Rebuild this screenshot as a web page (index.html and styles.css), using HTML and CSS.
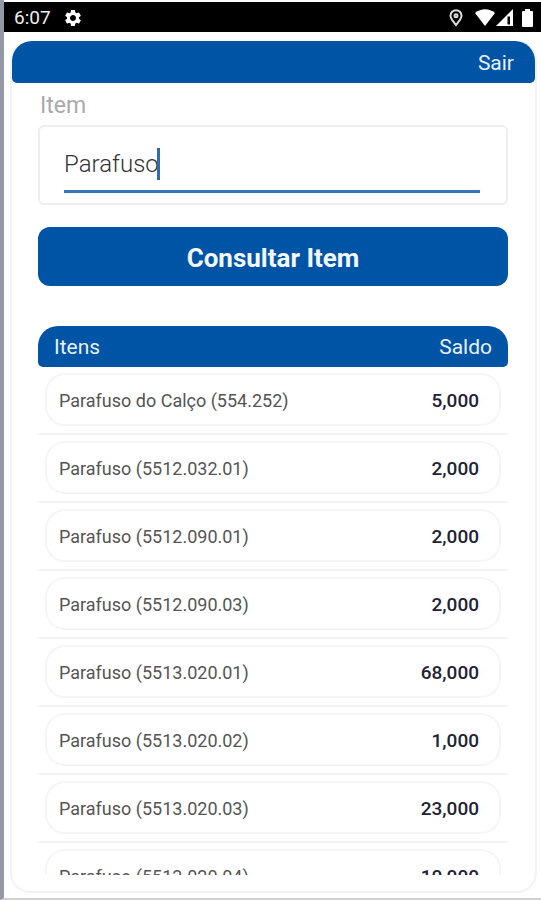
FILE: index.html
```html
<!DOCTYPE html>
<html lang="pt-BR">
<head>
    <meta charset="UTF-8">
    <meta name="viewport" content="width=device-width, initial-scale=1.0">
    <title>Consultar Item</title>
    <link rel="stylesheet" href="styles.css">
</head>
<body>
    <div class="status-bar">
        <span>6:07</span>
        <svg class="gear" width="20" height="20" viewBox="0 0 24 24" fill="#fff">
            <path d="M19.14 12.94c.04-.3.06-.61.06-.94 0-.32-.02-.64-.07-.94l2.03-1.58c.18-.14.23-.41.12-.61l-1.92-3.32c-.12-.22-.37-.29-.59-.22l-2.39.96c-.5-.38-1.03-.7-1.62-.94l-.36-2.54c-.04-.24-.24-.41-.48-.41h-3.84c-.24 0-.43.17-.47.41l-.36 2.54c-.59.24-1.13.57-1.62.94l-2.39-.96c-.22-.08-.47 0-.59.22L2.74 8.87c-.12.21-.08.47.12.61l2.03 1.58c-.05.3-.09.63-.09.94s.02.64.07.94l-2.03 1.58c-.18.14-.23.41-.12.61l1.92 3.32c.12.22.37.29.59.22l2.39-.96c.5.38 1.03.7 1.62.94l.36 2.54c.05.24.24.41.48.41h3.84c.24 0 .44-.17.47-.41l.36-2.54c.59-.24 1.13-.56 1.62-.94l2.39.96c.22.08.47 0 .59-.22l1.92-3.32c.12-.22.07-.47-.12-.61l-2.01-1.58zM12 15.6c-1.98 0-3.6-1.62-3.6-3.6s1.62-3.6 3.6-3.6 3.6 1.62 3.6 3.6-1.62 3.6-3.6 3.6z"/>
        </svg>
        <div class="status-icons">
            <svg class="pin" width="14" height="18" viewBox="0 0 14 18" fill="none" stroke="#ddd" stroke-width="2">
                <path d="M7 16C4 12.400 1.500 9.500 1.500 6.700a5.500 5.500 0 0 1 11 0C12.500 9.500 10 12.400 7 16z"/>
                <circle cx="7" cy="6.700" r="1.500"/>
            </svg>
            <svg width="20" height="17" viewBox="0 0 20 17" fill="#fff">
                <path d="M0 4C6-1 14-1 20 4L10 17z"/>
            </svg>
            <svg class="signal" width="17" height="17" viewBox="0 0 17 17">
                <path d="M0 17L17 0v17z" fill="#fff"/>
                <path d="M11.500 7.500h2.500v8h-2.500z" fill="#000"/>
            </svg>
            <svg class="battery" width="11" height="18" viewBox="0 0 11 18" fill="#fff">
                <path d="M3 0h5v2h2a1 1 0 0 1 1 1v14a1 1 0 0 1-1 1H1a1 1 0 0 1-1-1V3a1 1 0 0 1 1-1h2z"/>
            </svg>
        </div>
    </div>

    <div class="container">
        <div class="top-bar">
            <a href="#">Sair</a>
        </div>
        <div class="content">
            <label for="item">Item</label>
            <div class="input-box">
                <input type="text" id="item" value="Parafuso">
                <span class="cursor"></span>
            </div>
            <button type="button">Consultar Item</button>

            <table class="item-list">
                <thead>
                    <tr><th>Itens</th><th>Saldo</th></tr>
                </thead>
                <tbody>
                    <tr><td>Parafuso do Calço (554.252)</td><td>5,000</td></tr>
                    <tr><td>Parafuso (5512.032.01)</td><td>2,000</td></tr>
                    <tr><td>Parafuso (5512.090.01)</td><td>2,000</td></tr>
                    <tr><td>Parafuso (5512.090.03)</td><td>2,000</td></tr>
                    <tr><td>Parafuso (5513.020.01)</td><td>68,000</td></tr>
                    <tr><td>Parafuso (5513.020.02)</td><td>1,000</td></tr>
                    <tr><td>Parafuso (5513.020.03)</td><td>23,000</td></tr>
                    <tr><td>Parafuso (5513.020.04)</td><td>10,000</td></tr>
                </tbody>
            </table>
        </div>
    </div>
</body>
</html>
```

FILE: styles.css
```css
* {
    box-sizing: border-box;
}

body {
    font-family: Roboto, sans-serif;
    display: flex;
    flex-direction: column;
    height: 100vh;
    margin: 0;
    padding-top: 2px;
    background-color: #fff;
    border-left: 4px solid #9498a6;
    border-bottom: 2px solid #d0d0d0;
}

/* Status bar */
.status-bar {
    display: flex;
    flex-shrink: 0;
    align-items: center;
    height: 30px;
    padding: 1px 8px 0 10px;
    background-color: #000;
    color: #eee;
    font-size: 19px;
}

.gear {
    margin-left: 12px;
}

.status-icons {
    display: flex;
    align-items: center;
    margin-left: auto;
}

.pin {
    margin-right: 12px;
}

.signal {
    margin-left: 1px;
}

.battery {
    margin-left: 9px;
}

/* Card */
.container {
    display: flex;
    flex: 1;
    flex-direction: column;
    min-height: 0;
    margin: 9px 4px 5px 6px;
    border: 2px solid #f3f3f3;
    border-top: none;
    border-radius: 20px;
}

.top-bar {
    display: flex;
    flex-shrink: 0;
    align-items: center;
    justify-content: flex-end;
    height: 42px;
    padding: 2px 21px 0;
    background-color: #0054a6;
    border-radius: 20px 20px 5px 5px;
}

.top-bar a {
    color: #e8f0fa;
    font-size: 21px;
    text-decoration: none;
}

.content {
    display: flex;
    flex: 1;
    flex-direction: column;
    min-height: 0;
    padding: 9px 27px 16px 26px;
}

label {
    margin-left: 2px;
    color: #aaa;
    font-size: 23px;
    line-height: 28px;
}

.input-box {
    position: relative;
    flex-shrink: 0;
    margin-top: 5px;
    padding: 16px 26px 10px 24px;
    border: 2px solid #eee;
    border-radius: 6px;
}

input {
    display: block;
    width: 100%;
    height: 50px;
    padding: 0 0 5px;
    border: none;
    border-bottom: 3px solid #3a74b4;
    outline: none;
    background: none;
    color: #333;
    font-family: inherit;
    font-size: 24px;
    font-weight: 300;
}

.cursor {
    position: absolute;
    top: 21px;
    left: 117px;
    width: 3px;
    height: 32px;
    background-color: #2f6cb0;
}

button {
    flex-shrink: 0;
    height: 59px;
    margin: 22px 0 40px;
    padding: 2px 0 0;
    border: none;
    border-radius: 12px;
    background-color: #0054a6;
    color: #f4f8ff;
    font-family: inherit;
    font-size: 26px;
    font-weight: 700;
    cursor: pointer;
}

/* Results */
.item-list {
    display: block;
    flex: 1;
    min-height: 0;
    overflow: hidden;
}

.item-list thead,
.item-list tbody {
    display: block;
}

.item-list tr {
    display: flex;
}

.item-list thead tr {
    justify-content: space-between;
    padding: 2px 16px 0;
    background-color: #0054a6;
    border-radius: 20px 20px 5px 5px;
}

.item-list th {
    padding: 0;
    color: #e8f0fa;
    font-size: 21px;
    font-weight: 400;
    line-height: 39px;
}

.item-list tbody tr {
    padding: 6px 7px 7px;
    border-bottom: 2px solid #f3f3f3;
}

.item-list td {
    padding: 2px 0 0;
    border: 2px solid #f5f5f5;
    color: #555;
    font-size: 18px;
    line-height: 47px;
}

.item-list td:first-child {
    flex: 1;
    padding-left: 12px;
    border-right: none;
    border-radius: 20px 0 0 20px;
}

.item-list td:last-child {
    padding-right: 20px;
    border-left: none;
    border-radius: 0 20px 20px 0;
    color: #223;
    font-size: 19px;
    font-weight: 500;
}
```
